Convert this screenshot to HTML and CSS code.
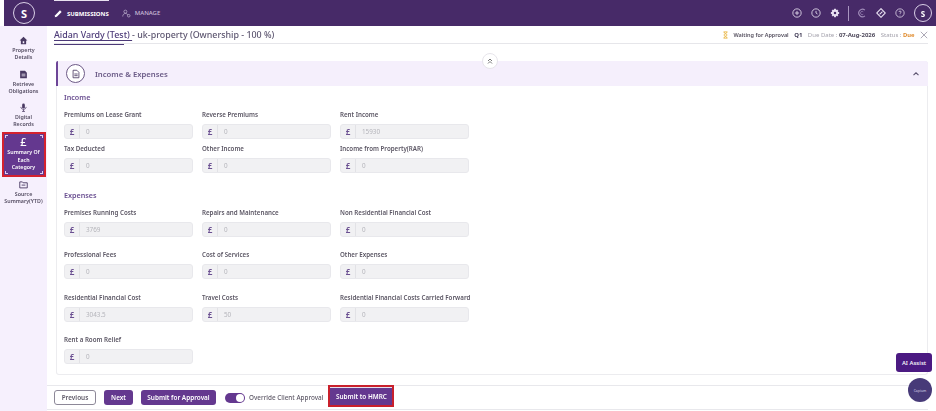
FILE: index.html
```html
<!DOCTYPE html>
<html lang="en">
<head>
<meta charset="utf-8">
<title>Income &amp; Expenses</title>
<link rel="stylesheet" href="styles.css">
</head>
<body>
<div class="app">
  <header class="topbar">
    <div class="brand"><span class="brand-circle">S</span></div>
    <nav class="tabs">
      <a class="tab tab-active">
        <svg class="tab-icon" viewBox="0 0 12 12"><path d="M1 11l.6-2.8L8 1.8l2.2 2.2-6.4 6.4z" fill="#fff"/></svg>
        SUBMISSIONS
      </a>
      <a class="tab">
        <svg class="tab-icon" viewBox="0 0 12 12" fill="none" stroke="#c9bdd8" stroke-width=".9"><circle cx="4.500" cy="3.500" r="2"/><path d="M1 10c0-2.500 1.500-4 3.500-4s3 1 3.200 2"/><circle cx="9" cy="9" r="1.700"/></svg>
        MANAGE
      </a>
    </nav>
    <div class="tools">
      <svg class="tool" viewBox="0 0 12 12" fill="none" stroke="#e9e2f2" stroke-width="1"><circle cx="6" cy="6" r="5"/><path d="M6 3.500v5M3.500 6h5"/></svg>
      <svg class="tool" viewBox="0 0 12 12" fill="none" stroke="#e9e2f2" stroke-width="1"><circle cx="6" cy="6" r="5"/><path d="M6 3.500V6l1.800 1.200"/></svg>
      <svg class="tool" viewBox="0 0 12 12"><path fill="#e9e2f2" fill-rule="evenodd" d="M5 1h2l.3 1.400 1.300-.6 1.400 1.400-.7 1.300L11 5v2l-1.700.4.700 1.300-1.400 1.400-1.300-.7L7 11H5l-.3-1.600-1.300.7L2 8.700l.7-1.300L1 7V5l1.700-.5L2 3.200l1.400-1.400 1.300.6zM6 4.500a1.500 1.500 0 100 3 1.500 1.500 0 000-3z"/></svg>
      <span class="tool-divider"></span>
      <svg class="tool" viewBox="0 0 12 12" fill="none" stroke="#9f8bb8" stroke-width="1.400"><path d="M9.500 2.500a4.500 4.500 0 100 7"/><path d="M7.500 4.500a2 2 0 100 3" stroke-width=".8"/></svg>
      <svg class="tool" viewBox="0 0 12 12" fill="none" stroke="#e9e2f2" stroke-width="1.300"><path d="M6 .8L11.200 6 6 11.200.8 6z"/><path d="M4.300 7.700l3.400-3.400"/></svg>
      <svg class="tool" viewBox="0 0 12 12" fill="none" stroke="#e9e2f2" stroke-width=".9"><circle cx="6" cy="6" r="5"/><path d="M4.700 4.800c0-1.600 2.700-1.600 2.700 0 0 1-1.400 1-1.400 2.200M6 8.200v.6"/></svg>
      <span class="user-circle">S</span>
    </div>
  </header>

  <div class="body">
    <aside class="sidebar">
      <a class="side-item">
        <svg class="side-icon" viewBox="0 0 12 12"><path fill="#4a3a63" fill-rule="evenodd" d="M6 1L.8 6h1.700v5h7V6h1.700zM5 7h2v2.500H5z"/></svg>
        <span>Property<br>Details</span>
      </a>
      <a class="side-item">
        <svg class="side-icon" viewBox="0 0 12 12"><path fill="#4a3a63" fill-rule="evenodd" d="M1.500 1h6.500l2.500 2.500V11h-9zM3.500 5v1h5V5zm0 2.200v1h5v-1z"/></svg>
        <span>Retrieve<br>Obligations</span>
      </a>
      <a class="side-item">
        <svg class="side-icon" viewBox="0 0 12 12"><rect x="4.200" y=".8" width="3.600" height="6.500" rx="1.800" fill="#4a3a63"/><path d="M2.500 5.200c0 4.300 7 4.300 7 0M6 8.500v2.700M4 11.200h4" fill="none" stroke="#4a3a63"/></svg>
        <span>Digital<br>Records</span>
      </a>
      <a class="side-item side-active">
        <span class="side-pound">£</span>
        <span class="side-active-label">Summary Of<br>Each<br>Category</span>
      </a>
      <a class="side-item">
        <svg class="side-icon" viewBox="0 0 12 12" fill="none" stroke="#4a3a63" stroke-width="1.200"><path d="M1 2.500h3.500l1 1.200h5.500V10.500H1z"/><path d="M3.500 6.800h5"/></svg>
        <span>Source<br>Summary(YTD)</span>
      </a>
    </aside>

    <main class="main">
      <div class="titlebar">
        <h1 class="page-title"><span class="client">Aidan Vardy (Test) </span>- uk-property (Ownership - 100 %)</h1>
        <div class="status">
          <svg class="hourglass" viewBox="0 0 8 12" fill="none" stroke="#e8b23a" stroke-width="1.300"><path d="M1 1h6M1 11h6M1.500 1c0 3 5 3 5 5s-5 2-5 5M6.500 1c0 3-5 3-5 5s5 2 5 5"/></svg>
          <span class="status-wait">Waiting for Approval</span>
          <strong class="status-q">Q1</strong>
          <span class="status-muted">Due Date : <b class="status-date">07-Aug-2026</b></span>
          <span class="status-muted">Status : <b class="status-due">Due</b></span>
          <svg class="close" viewBox="0 0 8 8" fill="none" stroke="#8a8496" stroke-width=".7"><path d="M.8.8l6.400 6.400M7.200.8L.8 7.200"/></svg>
        </div>
      </div>

      <button class="collapse-top" aria-label="Collapse">
        <svg viewBox="0 0 8 8" fill="none" stroke="#555" stroke-width=".8"><path d="M2 4l2-2 2 2M2 6.500l2-2 2 2"/></svg>
      </button>

      <section class="panel">
        <div class="panel-head">
          <span class="panel-icon">
            <svg viewBox="0 0 12 12" fill="none" stroke="#4a3a63" stroke-width="1"><path d="M2.500 1.500h4.500l2.500 2.500v6.500h-7z"/><path d="M4 6h4M4 8h4"/></svg>
          </span>
          <h2 class="panel-title">Income &amp; Expenses</h2>
          <svg class="chev" viewBox="0 0 8 8" fill="none" stroke="#5c5470" stroke-width="1.100"><path d="M1.500 5.200L4 2.800l2.500 2.400"/></svg>
        </div>
        <div class="panel-body">
          <h3 class="group-title">Income</h3>
          <div class="fields fields-income">
            <div class="field"><label>Premiums on Lease Grant</label><div class="input"><span class="cur">£</span><span class="val">0</span></div></div>
            <div class="field"><label>Reverse Premiums</label><div class="input"><span class="cur">£</span><span class="val">0</span></div></div>
            <div class="field"><label>Rent Income</label><div class="input"><span class="cur">£</span><span class="val">15930</span></div></div>
            <div class="field"><label>Tax Deducted</label><div class="input"><span class="cur">£</span><span class="val">0</span></div></div>
            <div class="field"><label>Other Income</label><div class="input"><span class="cur">£</span><span class="val">0</span></div></div>
            <div class="field"><label>Income from Property(RAR)</label><div class="input"><span class="cur">£</span><span class="val">0</span></div></div>
          </div>
          <h3 class="group-title group-expenses">Expenses</h3>
          <div class="fields fields-expenses">
            <div class="field"><label>Premises Running Costs</label><div class="input"><span class="cur">£</span><span class="val">3769</span></div></div>
            <div class="field"><label>Repairs and Maintenance</label><div class="input"><span class="cur">£</span><span class="val">0</span></div></div>
            <div class="field"><label>Non Residential Financial Cost</label><div class="input"><span class="cur">£</span><span class="val">0</span></div></div>
            <div class="field"><label>Professional Fees</label><div class="input"><span class="cur">£</span><span class="val">0</span></div></div>
            <div class="field"><label>Cost of Services</label><div class="input"><span class="cur">£</span><span class="val">0</span></div></div>
            <div class="field"><label>Other Expenses</label><div class="input"><span class="cur">£</span><span class="val">0</span></div></div>
            <div class="field"><label>Residential Financial Cost</label><div class="input"><span class="cur">£</span><span class="val">3043.5</span></div></div>
            <div class="field"><label>Travel Costs</label><div class="input"><span class="cur">£</span><span class="val">50</span></div></div>
            <div class="field"><label>Residential Financial Costs Carried Forward</label><div class="input"><span class="cur">£</span><span class="val">0</span></div></div>
            <div class="field"><label>Rent a Room Relief</label><div class="input"><span class="cur">£</span><span class="val">0</span></div></div>
          </div>
        </div>
      </section>

      <footer class="actions">
        <button class="btn btn-outline">Previous</button>
        <button class="btn btn-primary btn-next">Next</button>
        <button class="btn btn-primary btn-approval">Submit for Approval</button>
        <span class="toggle"><span class="knob"></span></span>
        <span class="toggle-label">Override Client Approval</span>
        <span class="hmrc-frame"><button class="btn btn-primary btn-hmrc">Submit to HMRC</button></span>
      </footer>
    </main>
  </div>
  <button class="ai-assist">AI Assist</button>
  <span class="fab">Capium</span>
</div>
</body>
</html>
```

FILE: styles.css
```css
* { box-sizing: border-box; }
html, body { margin: 0; padding: 0; }
body {
  width: 936px;
  height: 411px;
  overflow: hidden;
  background: #fff;
  font-family: "Noto Sans", "Open Sans", sans-serif;
  color: #5a5566;
}
.app {
  position: relative;
  width: 936px;
  height: 411px;
  display: flex;
  flex-direction: column;
  filter: blur(.3px);
}

.topbar {
  height: 26px;
  margin-left: 4px;
  background: #472a68;
  display: flex;
  align-items: center;
  flex: none;
}
.brand { width: 40px; display: flex; justify-content: center; flex: none; }
.brand-circle, .user-circle {
  display: flex;
  align-items: center;
  justify-content: center;
  border: 1px solid #d9cfe6;
  border-radius: 50%;
  color: #fff;
  font-weight: 700;
}
.brand-circle { width: 22px; height: 22px; font-size: 11px; }
.tabs { display: flex; align-self: stretch; gap: 13px; margin-left: 10px; }
.tab {
  display: flex;
  align-items: center;
  gap: 4px;
  height: 100%;
  font-size: 6px;
  font-weight: 500;
  color: #c9bdd8;
}
.tab-active { color: #fff; font-weight: 700; border-top: 1px solid #e8e1f0; }
.tab-icon { width: 9px; height: 9px; }
.tools { margin-left: auto; display: flex; align-items: center; gap: 9px; padding-right: 4px; }
.tool { width: 10px; height: 10px; }
.tool-divider { width: 1px; height: 15px; background: #a996c0; margin: 0 -1px; }
.user-circle { width: 18px; height: 18px; font-size: 8px; }

.body { flex: 1; display: flex; min-height: 0; }
.sidebar {
  width: 47px;
  flex: none;
  background: #f6f0fd;
  display: flex;
  flex-direction: column;
  align-items: center;
  padding-top: 10px;
}
.side-item {
  width: 44px;
  display: flex;
  flex-direction: column;
  align-items: center;
  text-align: center;
  font-size: 5.300px;
  line-height: 7px;
  color: #544d62;
  font-weight: 600;
  margin-bottom: 9px;
  white-space: nowrap;
}
.side-item:nth-child(2) { margin-bottom: 8px; }
.side-item:nth-child(3) { margin-bottom: 4px; }
.side-item span { display: block; }
.side-icon { width: 9px; height: 9px; margin-bottom: 2px; }
.side-active {
  position: relative;
  height: 45px;
  margin-bottom: 3px;
  background: #64388f;
  color: #fff;
  font-weight: 600;
  border: 2px solid #d4222f;
}
.side-active::after {
  content: "";
  position: absolute;
  inset: 1px;
  background:
    linear-gradient(#dccdf0, #dccdf0) left top / 3px 1px no-repeat,
    linear-gradient(#dccdf0, #dccdf0) left top / 1px 3px no-repeat,
    linear-gradient(#dccdf0, #dccdf0) right top / 3px 1px no-repeat,
    linear-gradient(#dccdf0, #dccdf0) right top / 1px 3px no-repeat,
    linear-gradient(#dccdf0, #dccdf0) left bottom / 3px 1px no-repeat,
    linear-gradient(#dccdf0, #dccdf0) left bottom / 1px 3px no-repeat,
    linear-gradient(#dccdf0, #dccdf0) right bottom / 3px 1px no-repeat,
    linear-gradient(#dccdf0, #dccdf0) right bottom / 1px 3px no-repeat;
}
.side-active .side-pound { font-size: 11px; line-height: 15px; font-weight: 500; }
.side-active-label { line-height: 7.500px; }

.main { position: relative; flex: 1; min-width: 0; display: flex; flex-direction: column; }
.titlebar {
  height: 18px;
  margin: 0 8px 0 7px;
  border-bottom: 1px solid #e6e6ea;
  display: flex;
  align-items: center;
  justify-content: space-between;
  flex: none;
}
.page-title { position: relative; margin: 0; font-size: 8.900px; font-weight: 500; color: #5d5670; white-space: nowrap; }
.page-title::after {
  content: "";
  position: absolute;
  left: 0;
  bottom: -4px;
  width: 70px;
  height: 1px;
  background: #4c3a78;
}
.client { color: #4c3a78; text-decoration: underline; text-underline-offset: 2px; font-weight: 500; }
.status { display: flex; align-items: center; gap: 5.500px; font-size: 5.500px; white-space: nowrap; }
.hourglass { width: 5px; height: 8px; margin-right: -.5px; }
.status-wait { color: #55505f; font-weight: 600; }
.status-q { color: #3f3a55; font-size: 6px; }
.status-muted { color: #a5a3ad; font-size: 6px; }
.status-date { color: #4f4a5c; }
.status-due { color: #e08b2d; font-size: 5.800px; }
.close { width: 8px; height: 8px; }

.collapse-top {
  position: absolute;
  left: 435px;
  top: 27px;
  width: 16px;
  height: 16px;
  padding: 3px;
  background: #fff;
  border: 1px solid #e6e4ea;
  border-radius: 50%;
  display: flex;
}
.collapse-top svg { width: 8px; height: 8px; }

.panel {
  margin: 17px 8px 0 9px;
  height: 314px;
  border: 1px solid #ececef;
  border-top: 0;
  border-radius: 3px;
  flex: none;
}
.panel-head {
  height: 25px;
  background: #f5effc;
  border-left: 2px solid #6d4597;
  border-radius: 2px 3px 0 0;
  margin-left: -1px;
  margin-right: -1px;
  display: flex;
  align-items: center;
  padding-left: 8px;
  padding-right: 8px;
}
.panel-icon {
  width: 19px;
  height: 19px;
  border: 1px solid #6d5a86;
  border-radius: 50%;
  display: flex;
  align-items: center;
  justify-content: center;
  background: #fff;
}
.panel-icon svg { width: 10px; height: 10px; }
.panel-title { margin: 0 0 0 10px; font-size: 7.700px; font-weight: 600; color: #6a5a86; }
.chev { width: 8px; height: 8px; margin-left: auto; }
.panel-body { padding: 6px 7px 0; }
.group-title { margin: 0; font-size: 7.200px; line-height: 10px; font-weight: 600; color: #6a4f91; }
.group-expenses { margin-top: 17px; }
.fields { display: grid; grid-template-columns: repeat(3, 129px); column-gap: 9px; }
.fields-income { margin-top: 8px; row-gap: 5px; }
.fields-expenses { margin-top: 8px; row-gap: 13.300px; }
.field label {
  display: block;
  font-size: 6.200px;
  line-height: 9px;
  margin-bottom: 5px;
  color: #5a5563;
  font-weight: 600;
  white-space: nowrap;
}
.input {
  height: 15px;
  background: #f1f1f3;
  border: 1px solid #e8e8ec;
  border-radius: 3px;
  display: flex;
  align-items: center;
}
.cur {
  width: 15px;
  height: 100%;
  border-right: 1px solid #e2e2e6;
  color: #6a4f91;
  font-size: 8px;
  font-weight: 600;
  display: flex;
  align-items: center;
  justify-content: center;
}
.val { margin-left: 6px; font-size: 6.300px; color: #b4b4ba; }

.actions {
  margin-top: 10px;
  height: 25px;
  margin-right: 8px;
  border-top: 1px solid #e8e8ec;
  border-bottom: 1px solid #e8e8ec;
  padding-left: 7px;
  display: flex;
  align-items: center;
  flex: none;
}
.btn {
  height: 15px;
  padding: 0;
  border-radius: 3px;
  font-family: inherit;
  font-size: 6.400px;
  font-weight: 600;
  border: 0;
}
.btn-outline { width: 42px; background: #fff; border: 1px solid #8d8898; color: #5f5a68; }
.btn-primary { background: #64388f; color: #fff; }
.btn-next { width: 29px; margin-left: 8px; }
.btn-approval { width: 75px; margin-left: 8px; }
.toggle {
  width: 20px;
  height: 10px;
  margin-left: 9px;
  background: #64388f;
  border-radius: 5px;
  display: flex;
  justify-content: flex-end;
  align-items: center;
  padding-right: 1px;
}
.knob { width: 8px; height: 8px; background: #fff; border-radius: 50%; }
.toggle-label { margin-left: 4px; font-size: 6.350px; font-weight: 500; color: #5f5a68; white-space: nowrap; }
.hmrc-frame { margin: 0 0 3px 5px; border: 2px solid #c9202c; display: flex; }
.btn-hmrc { width: 62px; height: 18px; border-radius: 0; border-top: 1px solid #e8e1f0; }

.ai-assist {
  position: absolute;
  left: 896px;
  top: 353px;
  width: 36px;
  height: 19px;
  padding: 0;
  border: 0;
  border-radius: 3px;
  background: #4b1a82;
  color: #fff;
  font-family: inherit;
  font-size: 6px;
  font-weight: 500;
}
.fab {
  position: absolute;
  left: 908px;
  top: 378px;
  width: 24px;
  height: 24px;
  border-radius: 50%;
  background: #473a78;
  color: #d9d4e8;
  font-size: 3.500px;
  display: flex;
  align-items: center;
  justify-content: center;
}
```
